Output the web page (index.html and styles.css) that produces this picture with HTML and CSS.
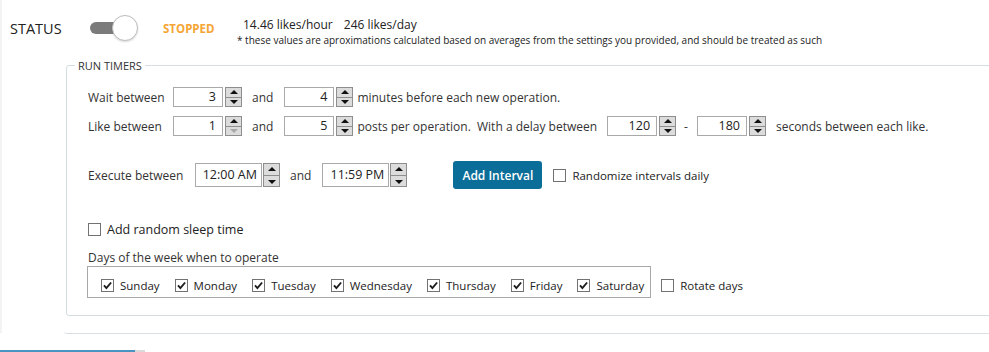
FILE: index.html
```html
<!DOCTYPE html>
<html lang="en">
<head>
  <meta charset="UTF-8" />
  <title>Run timers</title>
  <link rel="stylesheet" href="styles.css">
</head>
<body>
  <div class="page">
    <div class="top">
      <div class="status-label">STATUS</div>
      <div class="toggle">
        <span class="track"></span>
        <span class="knob"></span>
      </div>
      <div class="state">STOPPED</div>
      <div class="stats">
        <div class="rates"><span>14.46 likes/hour</span><span class="per-day">246 likes/day</span></div>
        <div class="note">* these values are aproximations calculated based on averages from the settings you provided, and should be treated as such</div>
      </div>
    </div>

    <fieldset class="timers">
      <legend>RUN TIMERS</legend>

      <div class="row">
        <span class="lbl">Wait between</span>
        <div class="spin"><span class="val">3</span><span class="btns"><span class="up"></span><span class="dn"></span></span></div>
        <span class="and">and</span>
        <div class="spin"><span class="val">4</span><span class="btns"><span class="up"></span><span class="dn"></span></span></div>
        <span class="after">minutes before each new operation.</span>
      </div>

      <div class="row">
        <span class="lbl">Like between</span>
        <div class="spin"><span class="val">1</span><span class="btns"><span class="up"></span><span class="dn off"></span></span></div>
        <span class="and">and</span>
        <div class="spin"><span class="val">5</span><span class="btns"><span class="up"></span><span class="dn"></span></span></div>
        <span class="after">posts per operation. &nbsp;With a delay between</span>
        <div class="spin gap-l"><span class="val">120</span><span class="btns"><span class="up"></span><span class="dn"></span></span></div>
        <span class="dash">-</span>
        <div class="spin"><span class="val">180</span><span class="btns"><span class="up"></span><span class="dn"></span></span></div>
        <span class="after wide">seconds between each like.</span>
      </div>

      <div class="row exec">
        <span class="lbl lbl-exec">Execute between</span>
        <div class="spin time"><span class="val">12:00 AM</span><span class="btns"><span class="up"></span><span class="dn"></span></span></div>
        <span class="and">and</span>
        <div class="spin time"><span class="val">11:59 PM</span><span class="btns"><span class="up"></span><span class="dn"></span></span></div>
        <button class="add-btn">Add Interval</button>
        <label class="check"><span class="cb"></span>Randomize intervals daily</label>
      </div>

      <label class="check sleep"><span class="cb"></span>Add random sleep time</label>

      <div class="days-title">Days of the week when to operate</div>
      <div class="days-row">
        <div class="days">
          <label class="check day"><span class="cb"><svg viewBox="0 0 11 11"><path d="M2 5.4 L4.4 8.1 L9.1 2.5"/></svg></span>Sunday</label>
          <label class="check day"><span class="cb"><svg viewBox="0 0 11 11"><path d="M2 5.4 L4.4 8.1 L9.1 2.5"/></svg></span>Monday</label>
          <label class="check day"><span class="cb"><svg viewBox="0 0 11 11"><path d="M2 5.4 L4.4 8.1 L9.1 2.5"/></svg></span>Tuesday</label>
          <label class="check day"><span class="cb"><svg viewBox="0 0 11 11"><path d="M2 5.4 L4.4 8.1 L9.1 2.5"/></svg></span>Wednesday</label>
          <label class="check day"><span class="cb"><svg viewBox="0 0 11 11"><path d="M2 5.4 L4.4 8.1 L9.1 2.5"/></svg></span>Thursday</label>
          <label class="check day"><span class="cb"><svg viewBox="0 0 11 11"><path d="M2 5.4 L4.4 8.1 L9.1 2.5"/></svg></span>Friday</label>
          <label class="check day last"><span class="cb"><svg viewBox="0 0 11 11"><path d="M2 5.4 L4.4 8.1 L9.1 2.5"/></svg></span>Saturday</label>
        </div>
        <label class="check rotate"><span class="cb"></span>Rotate days</label>
      </div>
    </fieldset>

    <div class="panel-end"></div>
  </div>
  <div class="tabline"><span class="active"></span><span class="rest"></span></div>
</body>
</html>
```

FILE: styles.css
```css
html, body {
  overflow: hidden;
}
body {
  margin: 0;
  font-family: 'Open Sans', 'Noto Sans', sans-serif;
  font-size: 12px;
  color: #333;
  background: #fff;
  width: 1040px;
}
.page {
  border-left: 2px solid #f3f3f3;
  height: 333px;
  box-sizing: border-box;
}

/* header */
.top {
  display: flex;
  align-items: center;
  height: 56px;
  padding-left: 8px;
}
.status-label {
  width: 80px;
  font-size: 14.5px;
  color: #222;
}
.toggle {
  position: relative;
  width: 48px;
  height: 26px;
}
.track {
  position: absolute;
  left: 0;
  top: 7px;
  width: 40px;
  height: 12px;
  border-radius: 6px;
  background: #7b7b7b;
}
.knob {
  position: absolute;
  left: 22px;
  top: 0;
  width: 24px;
  height: 24px;
  border-radius: 50%;
  background: #fff;
  border: 1px solid #bdbdbd;
  box-shadow: 0 1px 2px rgba(0,0,0,0.15);
}
.state {
  margin-left: 25px;
  width: 74px;
  font-weight: 700;
  font-size: 11.5px;
  color: #f5a533;
}
.stats {
  align-self: flex-start;
  padding-top: 16px;
}
.rates {
  padding-left: 6px;
  font-size: 12px;
  color: #222;
  line-height: 17px;
}
.per-day {
  margin-left: 11px;
}
.note {
  font-size: 10px;
  line-height: 13px;
  margin-top: 1px;
  color: #222;
}

/* run timers */
.timers {
  margin: 2px -60px 0 64px;
  padding: 14px 0 17px 21px;
  border: 1px solid #d3dde2;
  border-radius: 3px;
}
.timers legend {
  margin-left: -13px;
  padding: 0 3px;
  font-size: 11px;
  line-height: 15px;
  color: #333;
}
.row {
  display: flex;
  align-items: center;
  height: 20px;
  margin-bottom: 9px;
}
.lbl {
  width: 85px;
}
.lbl-exec {
  width: 107px;
}
.and {
  margin: 0 11px 0 10px;
}
.after {
  margin-left: 4px;
}
.after.wide {
  margin-left: 10px;
}
.gap-l {
  margin-left: 10px;
}
.dash {
  margin: 0 9px 0 8px;
}

.spin {
  display: flex;
  height: 20px;
}
.spin .val {
  width: 50px;
  box-sizing: border-box;
  border: 1px solid #a9a9a9;
  text-align: right;
  padding-right: 6px;
  line-height: 18px;
  font-size: 12.5px;
  color: #222;
}
.btns {
  display: flex;
  flex-direction: column;
  width: 17px;
  margin-left: 2px;
}
.btns span {
  position: relative;
  flex: 1;
  background: #dcdcdc;
  border: 1px solid #8e8e8e;
}
.btns .dn {
  border-top: none;
}
.btns span::after {
  content: "";
  position: absolute;
  left: 4px;
  top: 2px;
  border-left: 4px solid transparent;
  border-right: 4px solid transparent;
}
.btns .up::after {
  border-bottom: 4px solid #111;
}
.btns .dn::after {
  top: 2px;
  border-top: 4px solid #111;
}
.btns .dn.off::after {
  border-top-color: #a8a8a8;
}

.row.exec {
  height: 28px;
  margin-top: 25px;
  margin-bottom: 0;
}
.spin.time {
  height: 24px;
}
.spin.time .val {
  width: 67px;
  line-height: 22px;
  padding-right: 4px;
}
.spin.time .btns {
  margin-left: 1px;
}
.spin.time .btns span::after {
  top: 3px;
}
.spin.time .btns .dn::after {
  top: 4px;
}

.add-btn {
  margin-left: 46px;
  width: 89px;
  height: 28px;
  border: none;
  border-radius: 3px;
  background: #0b6e99;
  color: #fff;
  font-family: inherit;
  font-size: 12px;
  font-weight: 600;
}

.check {
  display: flex;
  align-items: center;
  font-size: 11.5px;
  color: #222;
}
.cb {
  width: 13px;
  height: 13px;
  box-sizing: border-box;
  border: 1px solid #727272;
  background: #fff;
  margin-right: 6px;
  flex-shrink: 0;
}
.cb svg {
  display: block;
  width: 11px;
  height: 11px;
}
.cb svg path {
  fill: none;
  stroke: #1d1d1d;
  stroke-width: 1.9;
}
.row.exec .check {
  margin-left: 11px;
}

.sleep {
  margin-top: 32px;
  font-size: 12.5px;
}
.sleep .cb {
  margin-right: 6px;
}
.days-title {
  margin-top: 12px;
  line-height: 16px;
}
.days-row {
  display: flex;
  align-items: center;
  margin-left: -1px;
}
.days {
  display: flex;
  align-items: center;
  border: 1px solid #a8a8a8;
  height: 32px;
  box-sizing: border-box;
  padding: 6px 6px 0 13px;
}
.day {
  margin-right: 15px;
}
.day.last {
  margin-right: 0;
}
.rotate {
  margin-left: 10px;
  padding-top: 6px;
}

.panel-end {
  margin-left: 62px;
  height: 17px;
  border-bottom: 1px solid #d8e0e3;
  border-bottom-left-radius: 3px;
}

.tabline {
  display: flex;
  margin-top: 17px;
  height: 3px;
}
.tabline .active {
  width: 135px;
  background: #4a94c2;
}
.tabline .rest {
  width: 10px;
  background: #d9d9d9;
}
```
